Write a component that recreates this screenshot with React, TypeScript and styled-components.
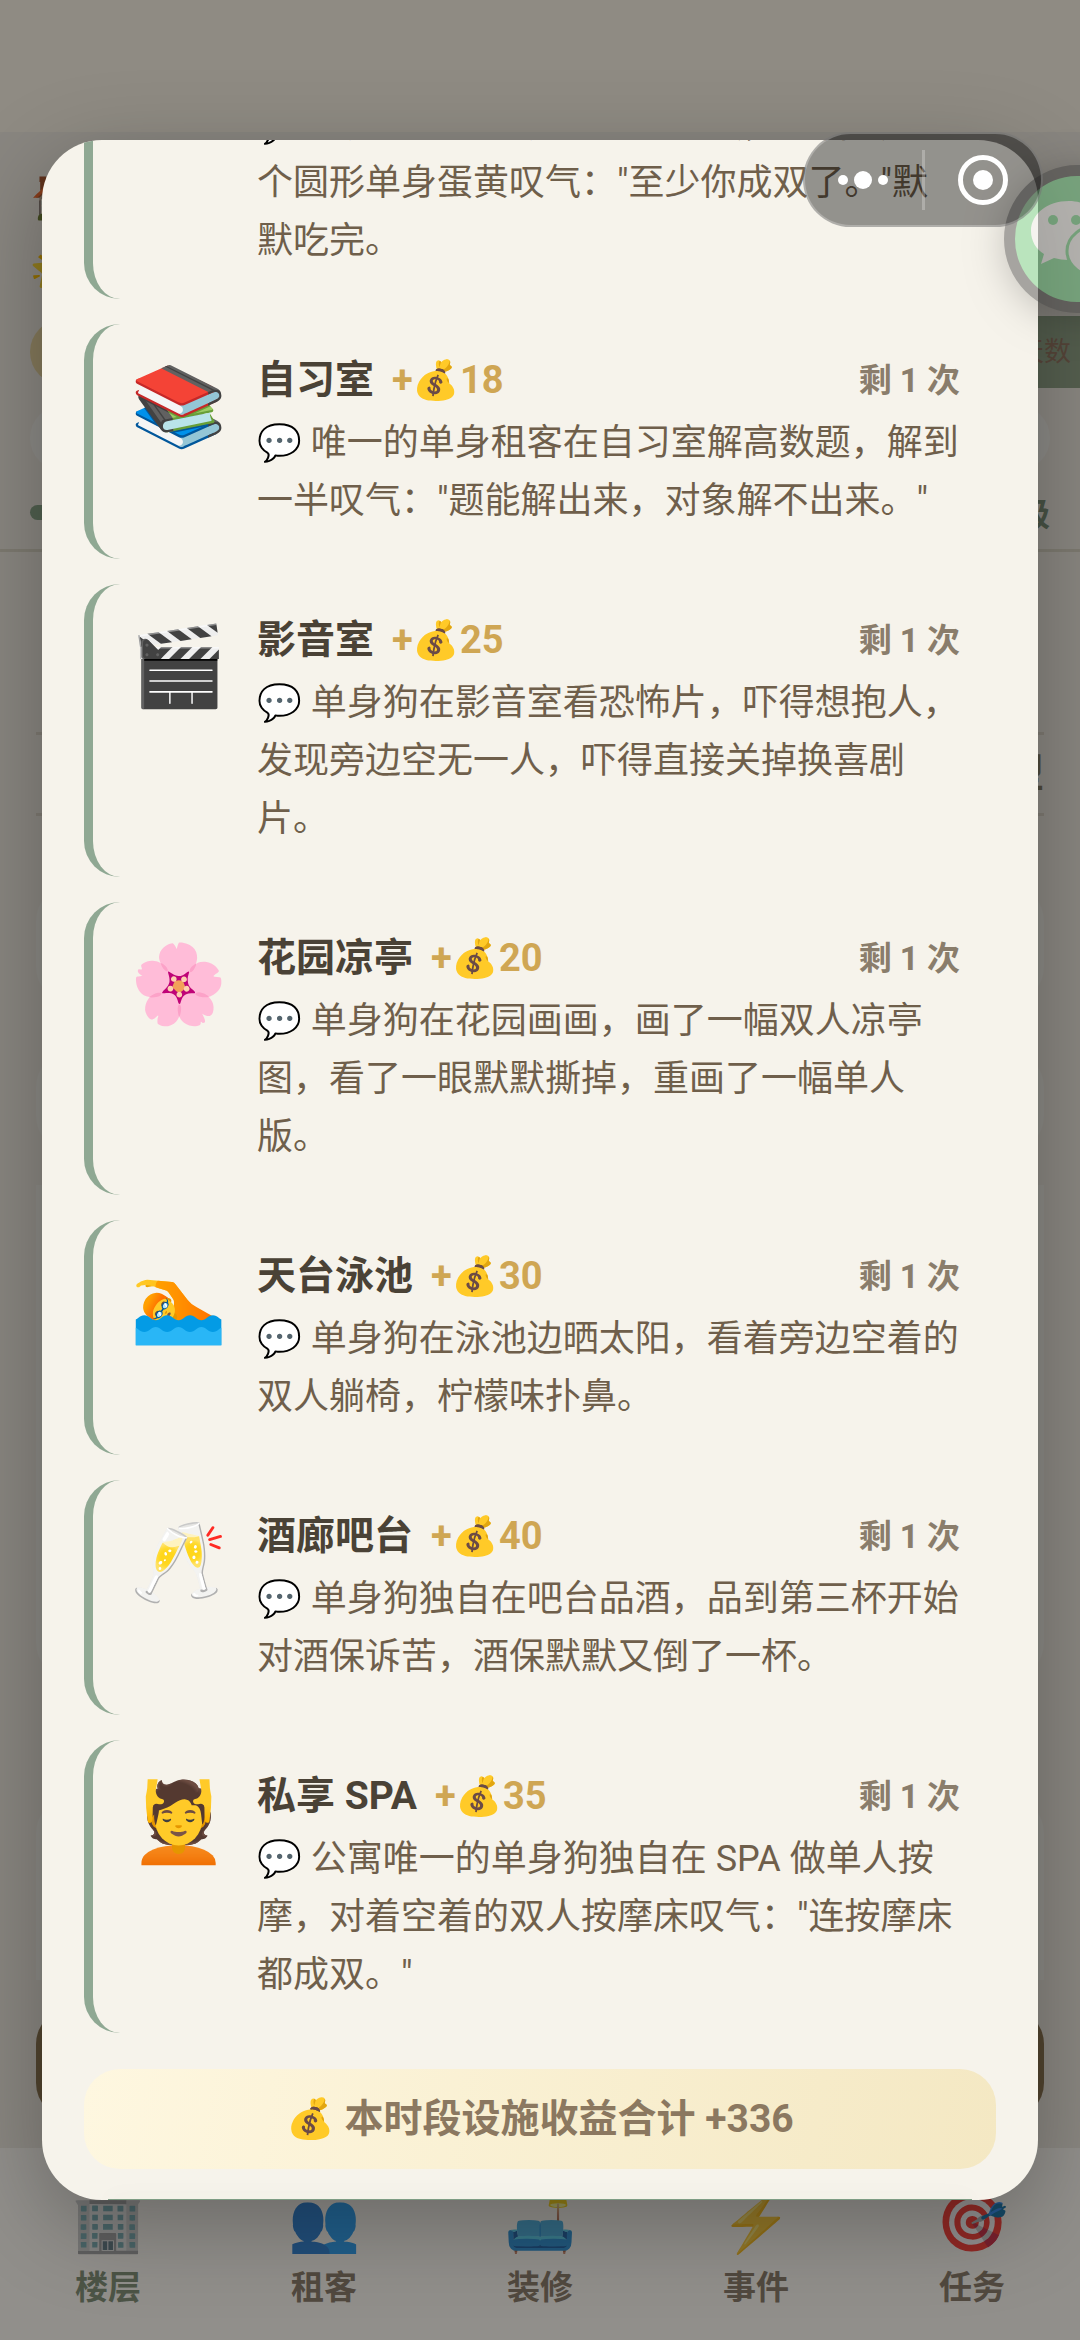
import React from "react";
import styled, { createGlobalStyle } from "styled-components";

const GlobalStyle = createGlobalStyle`
  *, *::before, *::after { box-sizing: border-box; }
  body {
    margin: 0;
    font-family: Roboto, "Noto Sans CJK SC", "Noto Color Emoji", sans-serif;
    background: #fdfaf0;
    color: #8a8068;
  }
  p, h2, ul { margin: 0; padding: 0; }
  button { font: inherit; border: 0; background: none; padding: 0; color: inherit; }
`;

const Screen = styled.div`
  position: relative;
  height: 100vh;
  overflow: hidden;
`;

const Page = styled.div`
  height: 100%;
  display: flex;
  flex-direction: column;
  background: #f1ebe2;
`;

const StatusStrip = styled.div`
  height: 132px;
  flex: none;
  background: #fbf5e6;
`;

const Header = styled.header`
  height: 420px;
  flex: none;
  padding: 36px 30px 0;
  border-bottom: 3px solid #dcd6c6;
  display: flex;
  flex-direction: column;
`;

const HeaderRow = styled.div<{ $height: number }>`
  height: ${(p) => p.$height}px;
  display: flex;
  justify-content: space-between;
  align-items: center;
`;

const Emoji = styled.span<{ $size: number }>`
  font-size: ${(p) => p.$size}px;
  line-height: 1;
`;

const Pill = styled.div<{ $tint: string }>`
  height: 66px;
  flex: 1;
  border-radius: 33px;
  background: ${(p) => p.$tint};
`;

const DayBadge = styled.div`
  width: 150px;
  height: 72px;
  margin-right: -30px;
  padding-right: 9px;
  background: #96a78c;
  color: #9a7c66;
  font-size: 27px;
  line-height: 72px;
  text-align: right;
`;

const Progress = styled.div`
  width: 600px;
  height: 15px;
  border-radius: 8px;
  background: #8fa98c;
`;

const Level = styled.span`
  font-size: 33px;
  font-weight: 700;
  color: #7f9279;
`;

const PageBody = styled.main`
  flex: 1;
  padding: 180px 36px 0;
  display: flex;
  flex-direction: column;
  overflow: hidden;
`;

const SectionTitle = styled.div`
  height: 84px;
  flex: none;
  margin-bottom: 69px;
  border-top: 3px solid #ddd6c9;
  border-bottom: 3px solid #ddd6c9;
  font-size: 39px;
  line-height: 78px;
  font-weight: 700;
  text-align: right;
`;

const Block = styled.div<{ $height: number; $gap: number; $tint: string; $radius: string }>`
  height: ${(p) => p.$height}px;
  flex: none;
  margin-bottom: ${(p) => p.$gap}px;
  border-radius: ${(p) => p.$radius};
  background: ${(p) => p.$tint};
`;

const TabBar = styled.nav`
  height: 192px;
  flex: none;
  display: flex;
  background: #fffbf4;
`;

const Tab = styled.button<{ $active?: boolean }>`
  flex: 1;
  padding: 45px 0 0;
  display: flex;
  flex-direction: column;
  align-items: center;
  gap: 13px;
  font-size: 33px;
  line-height: 48px;
  font-weight: 700;
  color: ${(p) => (p.$active ? "#86947c" : "#8f816f")};

  ${Emoji} { opacity: 0.85; }
`;

const FloatingChat = styled.button`
  position: absolute;
  top: 165px;
  right: -70px;
  width: 146px;
  height: 148px;
  padding-left: 16px;
  border: 11px solid #313131;
  border-radius: 50%;
  background: #61cf7a;
  box-shadow: 0 6px 36px rgba(0, 0, 0, 0.5);
  opacity: 0.4;
  display: flex;
  align-items: center;
`;

const Backdrop = styled.div`
  position: absolute;
  inset: 0;
  padding: 140px 42px;
  background: rgba(0, 0, 0, 0.43);
`;

const Dialog = styled.section`
  height: 100%;
  border-radius: 60px;
  padding: 0 42px;
  background: #f6f3eb;
  box-shadow: 0 24px 90px rgba(0, 0, 0, 0.28);
  overflow: hidden;
  display: flex;
  flex-direction: column;
  justify-content: flex-end;
`;

const List = styled.ul`
  flex: none;
  list-style: none;
  display: flex;
  flex-direction: column;
  gap: 25px;
`;

const Item = styled.li`
  padding: 30px 36px 29px 36px;
  border-left: 9px solid #8fa893;
  border-radius: 36px;
  display: flex;
  gap: 28px;
`;

const ItemIcon = styled.div`
  width: 100px;
  flex: none;
  display: flex;
  justify-content: center;
  font-size: 78px;
  line-height: 106px;
`;

const ItemBody = styled.div`
  flex: 1;
  min-width: 0;
`;

const ItemHead = styled.div`
  display: flex;
  align-items: center;
  height: 53px;
  margin-bottom: 7px;
`;

const Name = styled.h2`
  font-size: 39px;
  line-height: 53px;
  font-weight: 700;
  color: #4a4236;
`;

const Reward = styled.span`
  margin-left: 18px;
  font-size: 38px;
  line-height: 53px;
  font-weight: 700;
  color: #cfa653;
`;

const Left = styled.span`
  margin-left: auto;
  font-size: 33px;
  line-height: 53px;
  font-weight: 700;
  color: #8a7d6b;
`;

const Story = styled.p`
  font-size: 36px;
  line-height: 58px;
  color: #6f5f4b;
`;

const Total = styled.div`
  flex: none;
  margin-top: 36px;
  height: 100px;
  border-radius: 36px;
  background: linear-gradient(100deg, #fef7e0, #f4e8c3);
  color: #8b7860;
  font-size: 39px;
  line-height: 100px;
  font-weight: 700;
  text-align: center;
`;

const BottomEdge = styled.div`
  flex: none;
  height: 1px;
  margin: 30px 24px 0;
  background: #7f9d84;
  box-shadow: 0 3px 24px rgba(80, 105, 90, 0.3);
`;

const Capsule = styled.div`
  position: absolute;
  top: 132px;
  right: 37px;
  width: 240px;
  height: 95px;
  border: 2px solid rgba(255, 255, 255, 0.25);
  border-radius: 48px;
  background: rgba(0, 0, 0, 0.4);
  display: flex;
  align-items: center;
`;

const CapsuleButton = styled.button`
  flex: 1;
  height: 60px;
  display: flex;
  align-items: center;
  justify-content: center;
  & + & { border-left: 3px solid rgba(255, 255, 255, 0.25); }
`;

const facilities = [
  { icon: "🍳", name: "公共厨房", reward: 15, story: "单身狗在厨房煎了个双黄蛋，对着蛋里两个圆形单身蛋黄叹气：\"至少你成双了。\"默默吃完。" },
  { icon: "📚", name: "自习室", reward: 18, story: "唯一的单身租客在自习室解高数题，解到一半叹气：\"题能解出来，对象解不出来。\"" },
  { icon: "🎬", name: "影音室", reward: 25, story: "单身狗在影音室看恐怖片，吓得想抱人，发现旁边空无一人，吓得直接关掉换喜剧片。" },
  { icon: "🌸", name: "花园凉亭", reward: 20, story: "单身狗在花园画画，画了一幅双人凉亭图，看了一眼默默撕掉，重画了一幅单人版。" },
  { icon: "🏊", name: "天台泳池", reward: 30, story: "单身狗在泳池边晒太阳，看着旁边空着的双人躺椅，柠檬味扑鼻。" },
  { icon: "🥂", name: "酒廊吧台", reward: 40, story: "单身狗独自在吧台品酒，品到第三杯开始对酒保诉苦，酒保默默又倒了一杯。" },
  { icon: "💆", name: "私享 SPA", reward: 35, story: "公寓唯一的单身狗独自在 SPA 做单人按摩，对着空着的双人按摩床叹气：\"连按摩床都成双。\"" },
];

const tabs = [
  { icon: "🏢", label: "楼层" },
  { icon: "👥", label: "租客" },
  { icon: "🛋️", label: "装修" },
  { icon: "⚡", label: "事件" },
  { icon: "🎯", label: "任务" },
];

export default function App() {
  return (
    <Screen>
      <GlobalStyle />
      <Page>
        <StatusStrip />
        <Header>
          <HeaderRow $height={60}><Emoji $size={48}>🏠</Emoji></HeaderRow>
          <HeaderRow $height={84}><Emoji $size={36}>🌟</Emoji></HeaderRow>
          <HeaderRow $height={80}><Pill $tint="#e8d5a0" /><DayBadge>天数</DayBadge></HeaderRow>
          <HeaderRow $height={92}><Pill $tint="#f5f2ec" /></HeaderRow>
          <HeaderRow $height={56}><Progress /><Level>级</Level></HeaderRow>
        </Header>
        <PageBody>
          <SectionTitle>户型</SectionTitle>
          <Block $height={118} $gap={48} $tint="#f4f2ea" $radius="36px" />
          <Block $height={101} $gap={33} $tint="#f4f2ea" $radius="36px" />
          <Block $height={494} $gap={118} $tint="#f4f2ea" $radius="0 0 36px 36px" />
          <Block $height={183} $gap={28} $tint="#f4f2ea" $radius="36px 36px 0 0" />
          <Block $height={111} $gap={30} $tint="#8f7854" $radius="36px" />
        </PageBody>
        <TabBar>
          {tabs.map((t, i) => (
            <Tab key={t.label} $active={i === 0}>
              <Emoji $size={58}>{t.icon}</Emoji>
              {t.label}
            </Tab>
          ))}
        </TabBar>
      </Page>
      <Backdrop>
        <Dialog role="dialog" aria-label="设施收益">
          <List>
            {facilities.map((f) => (
              <Item key={f.name}>
                <ItemIcon>{f.icon}</ItemIcon>
                <ItemBody>
                  <ItemHead>
                    <Name>{f.name}</Name>
                    <Reward>+💰{f.reward}</Reward>
                    <Left>剩 1 次</Left>
                  </ItemHead>
                  <Story>💬 {f.story}</Story>
                </ItemBody>
              </Item>
            ))}
          </List>
          <Total>💰 本时段设施收益合计 +336</Total>
          <BottomEdge />
        </Dialog>
      </Backdrop>
      <FloatingChat aria-label="微信">
        <svg width="92" height="80" viewBox="0 0 92 80" fill="#f5f5f5">
          <path d="M38 2C16 2 0 15 0 32c0 10 5 18 13 23l-3 10 13-6c5 1 9 2 15 2C58 61 74 48 74 32S58 2 38 2z" />
          <ellipse cx="68" cy="52" rx="32" ry="26" stroke="#61cf7a" strokeWidth="3" />
          <circle cx="22" cy="21" r="5" fill="#61cf7a" />
          <circle cx="45" cy="21" r="5" fill="#61cf7a" />
        </svg>
      </FloatingChat>
      <Capsule>
        <CapsuleButton aria-label="更多">
          <svg width="52" height="20" viewBox="0 0 52 20" fill="#fff">
            <circle cx="6" cy="10" r="5" />
            <circle cx="26" cy="10" r="9" />
            <circle cx="46" cy="10" r="5" />
          </svg>
        </CapsuleButton>
        <CapsuleButton aria-label="关闭">
          <svg width="50" height="50" viewBox="0 0 50 50">
            <circle cx="25" cy="25" r="22.5" fill="none" stroke="#fff" strokeWidth="5" />
            <circle cx="25" cy="25" r="10" fill="#fff" />
          </svg>
        </CapsuleButton>
      </Capsule>
    </Screen>
  );
}
